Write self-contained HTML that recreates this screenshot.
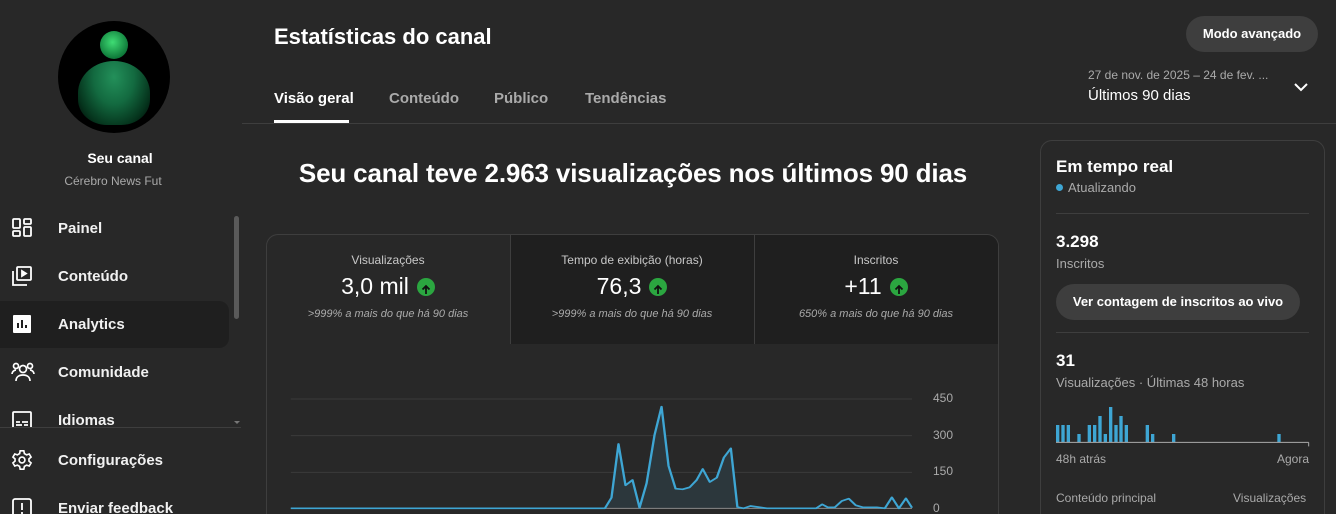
<!DOCTYPE html>
<html><head><meta charset="utf-8"><style>
*{margin:0;padding:0;box-sizing:border-box}
html,body{width:1336px;height:514px;overflow:hidden}
body{background:#282828;font-family:"Liberation Sans",Roboto,sans-serif;color:#fff;position:relative}
.a{position:absolute}
.nav{position:absolute;left:0;width:229px;height:48px;display:flex;align-items:center;font-size:15px;font-weight:bold;color:#f1f1f1}
.nav svg{position:absolute;left:11px;top:13px}
.nav span{position:absolute;left:58px}
.m{position:absolute;top:234px;width:244px;height:110px;text-align:center}
.m .t{margin-top:19px;font-size:12px;color:#c8c8c8}
.m .v{margin-top:6px;font-size:23px;display:flex;justify-content:center;align-items:center;gap:8px}
.m .v i{display:inline-block;width:18px;height:18px;border-radius:50%;background:#2ba640;position:relative}
.m .c{margin-top:8px;font-size:11px;font-style:italic;color:#aaa}
.yl{position:absolute;left:933px;font-size:12px;color:#aaa}
</style></head><body>
<!-- sidebar -->
<div class="a" style="left:58px;top:21px;width:112px;height:112px;border-radius:50%;background:#000;overflow:hidden">
<div class="a" style="left:20px;top:40px;width:72px;height:64px;border-radius:50% 50% 40% 40%;background:radial-gradient(ellipse at 50% 25%,#23905a 0,#136a40 40%,#05331c 75%,#000 100%)"></div>
</div>
<div class="a" style="left:100px;top:31px;width:28px;height:28px;border-radius:50%;background:radial-gradient(circle at 45% 40%,#3fdc74,#0f7a3a 70%,#053)"></div>
<div class="a" style="left:0;top:150px;width:240px;text-align:center;font-size:14px;font-weight:bold">Seu canal</div>
<div class="a" style="left:0;top:174px;width:226px;text-align:center;font-size:12px;color:#aaa">Cérebro News Fut</div>
<div class="a" style="left:234px;top:216px;width:5px;height:103px;border-radius:3px;background:#5a5a5a"></div>
<div class="nav" style="top:204px"><svg width="22" height="22" viewBox="0 0 22 22" fill="none" stroke="#fff" stroke-width="1.8"><rect x="2" y="2" width="7" height="9" rx="1"/><rect x="13" y="2" width="7" height="5" rx="1"/><rect x="2" y="14" width="7" height="5" rx="1"/><rect x="13" y="10" width="7" height="9" rx="1"/></svg><span>Painel</span></div>
<div class="nav" style="top:252px"><svg width="22" height="22" viewBox="0 0 22 22" fill="none" stroke="#fff" stroke-width="1.8"><rect x="6" y="2" width="14" height="13" rx="1"/><path d="M2 6v14h14"/><path d="M11 6l4 2.5-4 2.5z" fill="#fff"/></svg><span>Conteúdo</span></div>
<div class="a" style="left:0;top:301px;width:229px;height:47px;border-radius:0 10px 10px 0;background:#1f1f1f"></div>
<div class="nav" style="top:300px"><svg width="22" height="22" viewBox="0 0 22 22"><rect x="2" y="2" width="18" height="18" rx="1" fill="#fff"/><path d="M7 15V10M11 15V7M15 15v-3" stroke="#1f1f1f" stroke-width="2"/></svg><span>Analytics</span></div>
<div class="nav" style="top:348px"><svg width="24" height="22" viewBox="0 0 24 22" fill="none" stroke="#fff" stroke-width="1.7"><circle cx="12" cy="8" r="3.5"/><path d="M5 20c0-4 3-6 7-6s7 2 7 6"/><circle cx="5" cy="5" r="2.5"/><circle cx="19" cy="5" r="2.5"/><path d="M1 13c0-2 2-4 4-4M23 13c0-2-2-4-4-4"/></svg><span>Comunidade</span></div>
<div style="position:absolute;left:0;top:396px;width:240px;height:31px;overflow:hidden"><div class="nav" style="top:0"><svg width="22" height="22" viewBox="0 0 22 22" fill="none" stroke="#fff" stroke-width="1.8"><rect x="2" y="3" width="18" height="16" rx="1"/><path d="M5 13h4M11 13h6M5 16h6M13 16h4"/></svg><span>Idiomas</span></div></div>
<div class="a" style="left:234px;top:421px;border:3px solid transparent;border-top-color:#777"></div>
<div class="a" style="left:0;top:427px;width:241px;height:1px;background:#3e3e3e"></div>
<div class="nav" style="top:436px"><svg width="22" height="22" viewBox="0 0 24 24" fill="none" stroke="#fff" stroke-width="1.8"><circle cx="12" cy="12" r="3.2"/><path d="M10 2h4l.6 3 2.4 1.4 2.9-1 2 3.4-2.3 2v2.4l2.3 2-2 3.4-2.9-1L14.6 19 14 22h-4l-.6-3L7 17.6l-2.9 1-2-3.4 2.3-2v-2.4l-2.3-2 2-3.4 2.9 1L9.4 5z"/></svg><span>Configurações</span></div>
<div class="a" style="left:0;top:484px;width:240px;height:30px;overflow:hidden"><div class="nav" style="top:0"><svg width="22" height="22" viewBox="0 0 22 22" fill="none" stroke="#fff" stroke-width="1.8"><rect x="2" y="2" width="18" height="18" rx="2"/><path d="M11 6v7M11 15v2"/></svg><span>Enviar feedback</span></div></div>
<!-- header -->
<div class="a" style="left:274px;top:24px;font-size:22px;font-weight:bold">Estatísticas do canal</div>
<div class="a" style="left:274px;top:90px;font-size:15px;font-weight:bold">Visão geral</div>
<div class="a" style="left:389px;top:90px;font-size:15px;font-weight:bold;color:#aaa">Conteúdo</div>
<div class="a" style="left:494px;top:90px;font-size:15px;font-weight:bold;color:#aaa">Público</div>
<div class="a" style="left:585px;top:90px;font-size:15px;font-weight:bold;color:#aaa">Tendências</div>
<div class="a" style="left:274px;top:120px;width:75px;height:3px;background:#fff"></div>
<div class="a" style="left:242px;top:123px;width:1094px;height:1px;background:#3e3e3e"></div>
<div class="a" style="left:1186px;top:16px;width:132px;height:36px;border-radius:18px;background:#3e3e3e;font-size:13px;font-weight:bold;text-align:center;line-height:36px">Modo avançado</div>
<div class="a" style="left:1088px;top:68px;font-size:12px;color:#aaa">27 de nov. de 2025 – 24 de fev. ...</div>
<div class="a" style="left:1088px;top:87px;font-size:15px">Últimos 90 dias</div>
<svg class="a" style="left:1293px;top:81px" width="16" height="12" viewBox="0 0 16 12"><path d="M2 3l6 6 6-6" stroke="#fff" stroke-width="2" fill="none"/></svg>
<!-- main -->
<div class="a" style="left:266px;top:158px;width:734px;text-align:center;font-size:26px;font-weight:bold;letter-spacing:-0.15px;white-space:nowrap">Seu canal teve 2.963 visualizações nos últimos 90 dias</div>
<div class="a" style="left:266px;top:234px;width:733px;height:280px;border:1px solid #3e3e3e;border-bottom:none;border-radius:12px 12px 0 0;background:#282828;overflow:hidden">
<div class="a" style="left:244px;top:0;width:489px;height:109px;background:#1f1f1f"></div>
<div class="a" style="left:243px;top:0;width:1px;height:109px;background:#3e3e3e"></div>
<div class="a" style="left:487px;top:0;width:1px;height:109px;background:#3e3e3e"></div>
</div>
<div class="m" style="left:266px"><div class="t">Visualizações</div><div class="v">3,0 mil<i><svg width="18" height="18" viewBox="0 0 18 18"><path d="M9 13V5M5.5 8.5L9 5l3.5 3.5" stroke="#111" stroke-width="1.8" fill="none"/></svg></i></div><div class="c">&gt;999% a mais do que há 90 dias</div></div>
<div class="m" style="left:510px"><div class="t">Tempo de exibição (horas)</div><div class="v">76,3<i><svg width="18" height="18" viewBox="0 0 18 18"><path d="M9 13V5M5.5 8.5L9 5l3.5 3.5" stroke="#111" stroke-width="1.8" fill="none"/></svg></i></div><div class="c">&gt;999% a mais do que há 90 dias</div></div>
<div class="m" style="left:754px"><div class="t">Inscritos</div><div class="v">+11<i><svg width="18" height="18" viewBox="0 0 18 18"><path d="M9 13V5M5.5 8.5L9 5l3.5 3.5" stroke="#111" stroke-width="1.8" fill="none"/></svg></i></div><div class="c">650% a mais do que há 90 dias</div></div>
<svg class="a" style="left:266px;top:380px" width="734" height="134" viewBox="0 0 1568 402" preserveAspectRatio="none">
<g stroke="#3a3a3a" stroke-width="3"><path d="M53 57H1380M53 167H1380M53 277H1380"/></g>
<path d="M724 385L738 353L753 192L768 316L783 300L798 383L813 310L830 165L845 80L860 258L875 326L890 328L905 322L920 300L933 267L948 306L963 293L978 233L993 205L1007 385Z" fill="#2c373c"/>
<path d="M53 385H1380" stroke="#888" stroke-width="3"/>
<path d="M53 385L724 385L738 353L753 192L768 316L783 300L798 383L813 310L830 165L845 80L860 258L875 326L890 328L905 322L920 300L933 267L948 306L963 293L978 233L993 205L1007 381L1020 385L1035 378L1050 381L1070 385L1175 385L1188 373L1200 382L1215 382L1230 363L1245 356L1260 376L1275 382L1305 382L1322 385L1337 352L1352 385L1367 355L1380 383" fill="none" stroke="#3ea6d4" stroke-width="5" stroke-linejoin="round"/>
</svg>
<div class="yl" style="top:391px">450</div>
<div class="yl" style="top:428px">300</div>
<div class="yl" style="top:464px">150</div>
<div class="yl" style="top:501px">0</div>
<!-- right card -->
<div class="a" style="left:1040px;top:140px;width:285px;height:374px;border:1px solid #3e3e3e;border-bottom:none;border-radius:12px 12px 0 0"></div>
<div class="a" style="left:1056px;top:157px;font-size:17px;font-weight:bold">Em tempo real</div>
<div class="a" style="left:1056px;top:184px;width:7px;height:7px;border-radius:50%;background:#3ea6d4"></div>
<div class="a" style="left:1068px;top:180px;font-size:13px;color:#aaa">Atualizando</div>
<div class="a" style="left:1056px;top:213px;width:253px;height:1px;background:#3e3e3e"></div>
<div class="a" style="left:1056px;top:232px;font-size:17px;font-weight:bold">3.298</div>
<div class="a" style="left:1056px;top:256px;font-size:13px;color:#aaa">Inscritos</div>
<div class="a" style="left:1056px;top:284px;width:244px;height:36px;border-radius:18px;background:#3e3e3e;font-size:13px;font-weight:bold;text-align:center;line-height:36px">Ver contagem de inscritos ao vivo</div>
<div class="a" style="left:1056px;top:332px;width:253px;height:1px;background:#3e3e3e"></div>
<div class="a" style="left:1056px;top:351px;font-size:17px;font-weight:bold">31</div>
<div class="a" style="left:1056px;top:375px;font-size:13px;color:#aaa">Visualizações · Últimas 48 horas</div>
<svg class="a" style="left:1040px;top:380px" width="296" height="134" viewBox="0 0 888 402">
<g fill="#3ea6d4"><rect x="48" y="135" width="10" height="52"/><rect x="64" y="135" width="10" height="52"/><rect x="80" y="135" width="10" height="52"/><rect x="112" y="162" width="10" height="25"/><rect x="143" y="135" width="10" height="52"/><rect x="159" y="135" width="10" height="52"/><rect x="175" y="108" width="10" height="79"/><rect x="191" y="162" width="10" height="25"/><rect x="207" y="81" width="10" height="106"/><rect x="223" y="135" width="10" height="52"/><rect x="238" y="108" width="10" height="79"/><rect x="254" y="135" width="10" height="52"/><rect x="317" y="135" width="10" height="52"/><rect x="333" y="162" width="10" height="25"/><rect x="396" y="162" width="10" height="25"/><rect x="712" y="162" width="10" height="25"/></g>
<path d="M48 187H806M806 187v12" stroke="#aaa" stroke-width="3"/>
</svg>
<div class="a" style="left:1056px;top:452px;font-size:12px;color:#aaa">48h atrás</div>
<div class="a" style="left:1277px;top:452px;font-size:12px;color:#aaa">Agora</div>
<div class="a" style="left:1056px;top:491px;font-size:12px;color:#aaa">Conteúdo principal</div>
<div class="a" style="left:1233px;top:491px;font-size:12px;color:#aaa">Visualizações</div>
</body></html>
